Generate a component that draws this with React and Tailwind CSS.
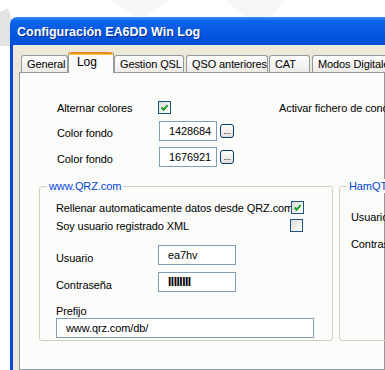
import React from "react";

const Check = ({ checked }) => (
  <div className="w-[13px] h-[13px] shrink-0 border border-[#1c5180] bg-[linear-gradient(135deg,#dcdcd7,#ffffff)] flex items-center justify-center">
    {checked && (
      <svg width="9" height="9" viewBox="0 0 9 9">
        <path d="M1.5 4.5 L3.6 6.7 L7.6 2.2" fill="none" stroke="#21a121" strokeWidth="2" />
      </svg>
    )}
  </div>
);

const Field = ({ w, children, className = "" }) => (
  <div
    className={`h-[20px] shrink-0 border border-[#7f9db9] bg-white flex items-center pl-[9px] ${className}`}
    style={{ width: w }}
  >
    {children}
  </div>
);

const DotsButton = () => (
  <div className="ml-[3px] w-[14px] h-[14px] shrink-0 rounded-[3px] border border-[#003c74] bg-[linear-gradient(180deg,#ffffff,#e3e0d6)] flex items-end justify-center text-[9px] leading-[9px] pb-[1px]">
    ...
  </div>
);

const Tab = ({ label, w, active, className = "" }) =>
  active ? (
    <div
      className={`relative z-10 h-[21px] shrink-0 bg-[#fbfbf9] border-x border-[#919b9c] rounded-t-[3px] flex flex-col ${className}`}
      style={{ width: w }}
    >
      <div className="h-[3px] rounded-t-[3px] bg-[#e68b2c] border-b border-[#ffc73c]" />
      <div className="pl-[8px] leading-[14px] text-[12px]">{label}</div>
    </div>
  ) : (
    <div
      className={`mt-[3px] h-[17px] shrink-0 border border-b-0 border-[#919b9c] rounded-t-[3px] bg-[linear-gradient(180deg,#ffffff,#ecebe6)] pl-[5px] leading-[16px] whitespace-nowrap overflow-hidden ${className}`}
      style={{ width: w }}
    >
      {label}
    </div>
  );

export default function App() {
  return (
    <div className="relative w-[385px] h-[370px] overflow-hidden bg-white text-[11px] leading-[14px] tracking-[-0.1px] text-black font-['Liberation_Sans',Arial,sans-serif]">
      <svg className="absolute left-0 top-0" width="385" height="50">
        <path d="M0 12 L8 8 L12 20 L12 46 L0 46 Z" fill="#e3e3e3" />
        <path d="M225 0 L260 30 L285 0 Z" fill="#f6f6f6" />
        <path d="M110 0 L140 20 L170 0 Z" fill="#f7f7f7" />
      </svg>

      <div className="relative ml-[10px] mt-[17px] h-[353px] flex flex-col rounded-tl-[7px] overflow-hidden">
        <div className="h-[28px] shrink-0 pl-[7px] pt-[1px] flex items-center bg-[linear-gradient(180deg,#3a8df7_0%,#0c63ea_14%,#0558e2_55%,#044fd8_100%)] text-white font-bold text-[12.5px] tracking-normal [text-shadow:1px_1px_0_#0a2f95]">
          Configuración EA6DD Win Log
        </div>

        <div className="flex-1 flex flex-col bg-[#ece9d8] border-l-[3px] border-[#0a49d6] pl-[6px] pt-[7px]">
          <div className="flex items-start h-[20px] pl-[2px]">
            <Tab label="General" w={47} />
            <Tab label="Log" w={46} active />
            <Tab label="Gestion QSL" w={70} />
            <Tab label="QSO anteriores" w={82} className="ml-[2px]" />
            <Tab label="CAT" w={41} className="ml-[1px]" />
            <Tab label="Modos Digitales" w={90} className="ml-[2px]" />
          </div>

          <div className="flex-1 border border-[#919b9c] bg-[#fbfbf9]">
            <div className="mt-[28px] pl-[37px] h-[13px] flex items-center">
              <span className="w-[101px] shrink-0">Alternar colores</span>
              <Check checked />
              <span className="ml-[108px] whitespace-nowrap">Activar fichero de concursos</span>
            </div>

            <div className="mt-[7px] pl-[37px] flex items-center">
              <span className="w-[102px] shrink-0 pt-[3px]">Color fondo</span>
              <Field w={58}>1428684</Field>
              <DotsButton />
            </div>

            <div className="mt-[6px] pl-[37px] flex items-center">
              <span className="w-[102px] shrink-0 pt-[3px]">Color fondo</span>
              <Field w={58}>1676921</Field>
              <DotsButton />
            </div>

            <div className="mt-[19px] pl-[19px] flex gap-[6px] items-start">
              <div className="relative w-[294px] h-[155px] shrink-0 border border-[#d0d0bf] rounded-[3px]">
                <span className="absolute -top-[8px] left-[7px] px-[2px] bg-[#fbfbf9] text-[#0046d5]">
                  www.QRZ.com
                </span>
                <div className="pl-[16px]">
                  <div className="mt-[14px] h-[13px] flex items-center">
                    <span className="w-[235px] shrink-0 whitespace-nowrap">
                      Rellenar automaticamente datos desde QRZ.com
                    </span>
                    <Check checked />
                  </div>
                  <div className="mt-[5px] h-[13px] flex items-center">
                    <span className="w-[234px] shrink-0 whitespace-nowrap">Soy usuario registrado XML</span>
                    <Check />
                  </div>
                  <div className="mt-[12px] flex items-center">
                    <span className="w-[102px] shrink-0 pt-[7px]">Usuario</span>
                    <Field w={78} className="pl-[6px]">ea7hv</Field>
                  </div>
                  <div className="mt-[6px] flex items-center">
                    <span className="w-[102px] shrink-0 pt-[7px]">Contraseña</span>
                    <Field w={78} className="pl-[4px]">
                      <span className="font-bold tracking-[-0.5px] text-[12px]">IIIIIIII</span>
                    </Field>
                  </div>
                  <div className="mt-[12px]">Prefijo</div>
                  <Field w={258} className="pl-[4px]">www.qrz.com/db/</Field>
                </div>
              </div>

              <div className="relative w-[100px] h-[155px] shrink-0 border border-[#d0d0bf] rounded-[3px]">
                <span className="absolute -top-[8px] left-[7px] px-[2px] bg-[#fbfbf9] text-[#0046d5] whitespace-nowrap">
                  HamQTH.com
                </span>
                <div className="pl-[11px]">
                  <div className="mt-[23px]">Usuario</div>
                  <div className="mt-[13px]">Contraseña</div>
                </div>
              </div>
            </div>
          </div>
        </div>
      </div>
    </div>
  );
}
